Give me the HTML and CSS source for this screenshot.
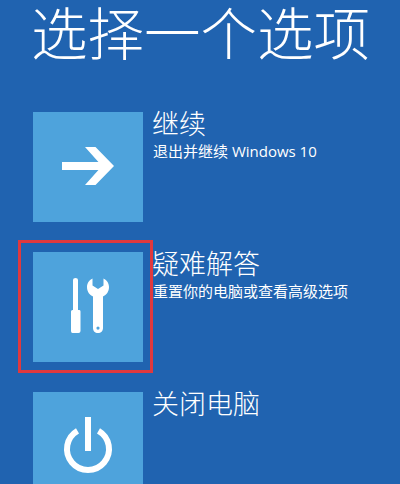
FILE: index.html
```html
<!DOCTYPE html>
<html lang="zh-CN">
<head>
<meta charset="utf-8">
<title>选择一个选项</title>
<link rel="stylesheet" href="styles.css">
</head>
<body>
<main class="screen">
  <h1 class="title">选择一个选项</h1>
  <div class="options">
    <div class="option">
      <div class="tile">
        <svg class="icon" viewBox="0 0 110 110">
          <rect x="29" y="50" width="44" height="8" fill="#fff"/>
          <path d="M52 35H62.500L81 54L62.500 73H52L69 54Z" fill="#fff"/>
        </svg>
      </div>
      <div class="text">
        <div class="name">继续</div>
        <div class="desc">退出并继续 Windows 10</div>
      </div>
    </div>
    <div class="option">
      <div class="tile">
        <svg class="icon" viewBox="0 0 110 110">
          <path d="M40 28Q40 26 42.500 26Q45 26 45 28V58H46.500Q47.500 58 47.500 59.500V79Q47.500 81 45.500 81H39.500Q38 81 38 79V59.500Q38 58 39.500 58H40Z" fill="#fff"/>
          <path fill-rule="evenodd" d="M59.500 26.500V33.500L65 37L70.500 33.500V26.500C74 28 76 31.500 76 35C76 39.500 73.500 43 70 44.500V76C70 79 68 81 65 81C62 81 60 79 60 76V44.500C56.500 43 54 39.500 54 35C54 31.500 56 28 59.500 26.500ZM65 74.500A1.600 1.600 0 1 0 65 77.700A1.600 1.600 0 1 0 65 74.500Z" fill="#fff"/>
        </svg>
      </div>
      <div class="text">
        <div class="name">疑难解答</div>
        <div class="desc">重置你的电脑或查看高级选项</div>
      </div>
      <div class="highlight"></div>
    </div>
    <div class="option">
      <div class="tile">
        <svg class="icon" viewBox="0 0 110 110">
          <path d="M44.500 38.800A21 21 0 1 0 65.500 38.800" fill="none" stroke="#fff" stroke-width="6"/>
          <rect x="52" y="25" width="6" height="34" fill="#fff"/>
        </svg>
      </div>
      <div class="text">
        <div class="name">关闭电脑</div>
      </div>
    </div>
  </div>
</main>
</body>
</html>
```
FILE: styles.css
```css
html, body {
  margin: 0;
  height: 100%;
  overflow: hidden;
}

body {
  background: #2063b0;
  color: #fff;
  font-family: "Noto Sans CJK SC", "Noto Sans", sans-serif;
}

.screen {
  padding-left: 33px;
}

.title {
  margin: 0 0 0 -2px;
  height: 112px;
  font-size: 56.500px;
  font-weight: 300;
  line-height: 60px;
  white-space: nowrap;
}

.options {
  display: flex;
  flex-direction: column;
  gap: 30px;
}

.option {
  position: relative;
  display: flex;
  gap: 10px;
}

.tile {
  flex: none;
  width: 110px;
  height: 110px;
  background: #4ea3dc;
}

.icon {
  display: block;
  width: 110px;
  height: 110px;
}

.name {
  margin: 0 0 8px -1px;
  font-size: 27px;
  font-weight: 300;
  line-height: 22px;
}

.desc {
  font-family: "Open Sans", "Noto Sans CJK SC", sans-serif;
  font-size: 15px;
  line-height: 18px;
  white-space: nowrap;
}

.highlight {
  position: absolute;
  left: -15px;
  top: -12px;
  width: 129px;
  height: 127px;
  border: 3px solid #e0393e;
}
```
